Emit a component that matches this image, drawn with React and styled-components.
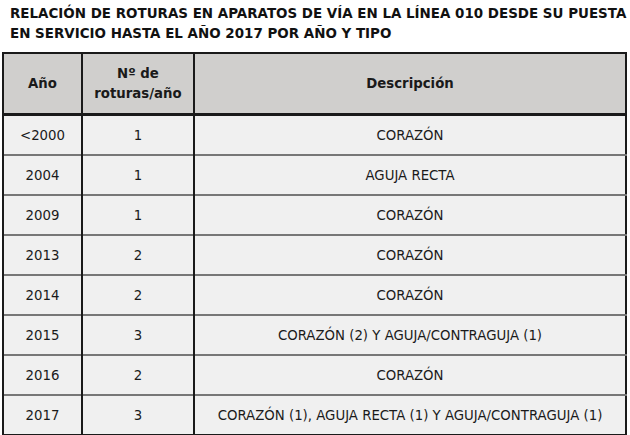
import styled, { createGlobalStyle } from "styled-components";

const GlobalStyle = createGlobalStyle`
  body {
    margin: 0;
    background: #ffffff;
    font-family: "DejaVu Sans", Verdana, sans-serif;
  }
`;

const Page = styled.div`
  width: 630px;
  height: 435px;
  padding: 4px 0 0 2px;
  box-sizing: border-box;
  overflow: hidden;
`;

const Title = styled.h1`
  margin: 0 0 8px 8px;
  font-size: 13.45px;
  line-height: 20px;
  font-weight: bold;
  color: #111;
`;

const Table = styled.table`
  width: 625px;
  border-collapse: collapse;
  table-layout: fixed;
  border: 2px solid #1a1a1a;
`;

const HeadCell = styled.th`
  background: #d0cfcd;
  height: 59px;
  padding: 0;
  font-size: 13.3px;
  line-height: 20px;
  font-weight: bold;
  color: #1a1a1a;
  text-align: center;
  border-left: 2px solid #1a1a1a;
  border-bottom: 3px solid #1a1a1a;
  width: ${(p) => (p.$w ? `${p.$w}px` : "auto")};
`;

const Cell = styled.td`
  background: #f0f0f0;
  height: 38px;
  padding: 0;
  font-size: 13.3px;
  color: #1a1a1a;
  text-align: center;
  border-left: 2px solid #1a1a1a;
  border-top: 2px solid #777;
`;

const rows = [
  ["<2000", "1", "CORAZÓN"],
  ["2004", "1", "AGUJA RECTA"],
  ["2009", "1", "CORAZÓN"],
  ["2013", "2", "CORAZÓN"],
  ["2014", "2", "CORAZÓN"],
  ["2015", "3", "CORAZÓN (2) Y AGUJA/CONTRAGUJA (1)"],
  ["2016", "2", "CORAZÓN"],
  ["2017", "3", "CORAZÓN (1), AGUJA RECTA (1) Y AGUJA/CONTRAGUJA (1)"],
];

export default function App() {
  return (
    <Page>
      <GlobalStyle />
      <Title>
        RELACIÓN DE ROTURAS EN APARATOS DE VÍA EN LA LÍNEA 010 DESDE SU PUESTA
        <br />
        EN SERVICIO HASTA EL AÑO 2017 POR AÑO Y TIPO
      </Title>
      <Table>
        <thead>
          <tr>
            <HeadCell $w={77}>Año</HeadCell>
            <HeadCell $w={110}>
              Nº de
              <br />
              roturas/año
            </HeadCell>
            <HeadCell>Descripción</HeadCell>
          </tr>
        </thead>
        <tbody>
          {rows.map(([year, count, desc]) => (
            <tr key={year}>
              <Cell>{year}</Cell>
              <Cell>{count}</Cell>
              <Cell>{desc}</Cell>
            </tr>
          ))}
        </tbody>
      </Table>
    </Page>
  );
}
